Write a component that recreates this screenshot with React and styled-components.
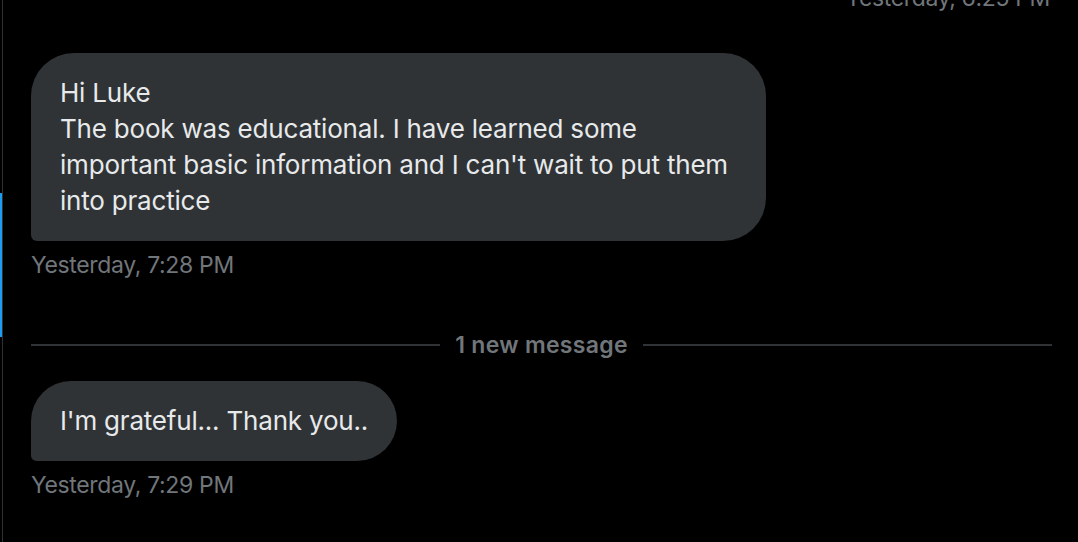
import React from "react";
import styled, { createGlobalStyle } from "styled-components";

const Global = createGlobalStyle`
  html, body { margin: 0; padding: 0; background: #000; }
  body { font-family: Inter, "Noto Sans", "Liberation Sans", sans-serif; overflow: hidden; }
  * { box-sizing: border-box; }
`;

const Page = styled.div`
  position: relative;
  width: 1078px;
  height: 542px;
  padding-left: 2px;
  background: #000;
  overflow: hidden;
`;

const Indicator = styled.div`
  position: absolute;
  left: 0;
  top: 193px;
  width: 2px;
  height: 144px;
  background: #1d9bf0;
`;

const Panel = styled.div`
  height: 100%;
  border-left: 1px solid #2f3336;
  padding: 0 26px 0 28px;
  display: flex;
  flex-direction: column;
`;

const Stamp = styled.div`
  height: 28px;
  line-height: 28px;
  font-size: 23px;
  letter-spacing: -0.35px;
  color: #71767b;
  margin-top: ${(p) => p.$mt}px;
  text-align: ${(p) => (p.$right ? "right" : "left")};
  padding-right: ${(p) => (p.$right ? 2 : 0)}px;
  white-space: nowrap;
`;

const Bubble = styled.div`
  align-self: flex-start;
  margin-top: ${(p) => p.$mt}px;
  background: #2f3336;
  color: #e7e9ea;
  font-size: 26px;
  letter-spacing: -0.2px;
  line-height: 36px;
  padding: 22px 29px;
  border-radius: 43px 43px 43px 6px;
  width: ${(p) => (p.$w ? `${p.$w}px` : "auto")};
  white-space: nowrap;
`;

const Divider = styled.div`
  margin-top: 52px;
  height: 28px;
  display: flex;
  align-items: center;
  gap: 15px;
  &::before, &::after {
    content: "";
    flex: 1;
    height: 2px;
    background: #2f3336;
  }
`;

const DividerText = styled.span`
  font-size: 23px;
  font-weight: 600;
  letter-spacing: 0.3px;
  color: #71767b;
  white-space: nowrap;
`;

export default function App() {
  return (
    <>
      <Global />
      <Page>
        <Indicator />
        <Panel>
          <Stamp $right $mt={-16}>Yesterday, 6:25 PM</Stamp>
          <Bubble $mt={41} $w={735}>
            Hi Luke
            <br />
            The book was educational. I have learned some
            <br />
            important basic information and I can't wait to put them
            <br />
            into practice
          </Bubble>
          <Stamp $mt={10}>Yesterday, 7:28 PM</Stamp>
          <Divider>
            <DividerText>1 new message</DividerText>
          </Divider>
          <Bubble $mt={22}>I'm grateful... Thank you..</Bubble>
          <Stamp $mt={10}>Yesterday, 7:29 PM</Stamp>
        </Panel>
      </Page>
    </>
  );
}
